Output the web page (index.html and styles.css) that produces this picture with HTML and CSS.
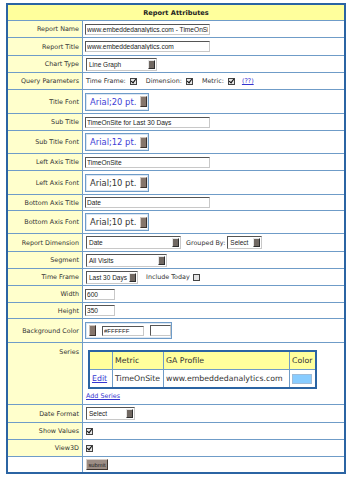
FILE: index.html
```html
<!DOCTYPE html>
<html>
<head>
<meta charset="utf-8">
<link rel="stylesheet" href="styles.css">
</head>
<body>
<div class="attrs">
  <div class="hd">Report Attributes</div>

  <div class="lbl">Report Name</div>
  <div class="val"><input class="txt wide" value="www.embeddedanalytics.com - TimeOnSite"></div>

  <div class="lbl">Report Title</div>
  <div class="val"><input class="txt wide" value="www.embeddedanalytics.com"></div>

  <div class="lbl">Chart Type</div>
  <div class="val"><span class="sel w-chart"><span class="sel-t">Line Graph</span><span class="arr"></span></span></div>

  <div class="lbl">Query Parameters</div>
  <div class="val"><span class="qp">Time Frame:</span><span class="cb on"></span><span class="qp">Dimension:</span><span class="cb on"></span><span class="qp">Metric:</span><span class="cb on"></span><a class="lnk qq" href="#">(??)</a></div>

  <div class="lbl">Title Font</div>
  <div class="val"><span class="fp blue"><span class="fp-t">Arial;20 pt.</span><span class="btn-b"></span></span></div>

  <div class="lbl">Sub Title</div>
  <div class="val"><input class="txt wide" value="TimeOnSite for Last 30 Days"></div>

  <div class="lbl">Sub Title Font</div>
  <div class="val"><span class="fp blue"><span class="fp-t">Arial;12 pt.</span><span class="btn-b"></span></span></div>

  <div class="lbl">Left Axis Title</div>
  <div class="val"><input class="txt wide" value="TimeOnSite"></div>

  <div class="lbl">Left Axis Font</div>
  <div class="val"><span class="fp"><span class="fp-t">Arial;10 pt.</span><span class="btn-b"></span></span></div>

  <div class="lbl">Bottom Axis Title</div>
  <div class="val"><input class="txt wide" value="Date"></div>

  <div class="lbl">Bottom Axis Font</div>
  <div class="val"><span class="fp"><span class="fp-t">Arial;10 pt.</span><span class="btn-b"></span></span></div>

  <div class="lbl">Report Dimension</div>
  <div class="val"><span class="sel w-dim"><span class="sel-t">Date</span><span class="arr"></span></span><span class="grp">Grouped By:</span><span class="sel w-grp"><span class="sel-t">Select</span><span class="arr"></span></span></div>

  <div class="lbl">Segment</div>
  <div class="val"><span class="sel w-seg"><span class="sel-t">All Visits</span><span class="arr"></span></span></div>

  <div class="lbl">Time Frame</div>
  <div class="val"><span class="sel w-tf"><span class="sel-t">Last 30 Days</span><span class="arr"></span></span><span class="inc">Include Today</span><span class="cb"></span></div>

  <div class="lbl">Width</div>
  <div class="val"><input class="txt num" value="600"></div>

  <div class="lbl">Height</div>
  <div class="val"><input class="txt num" value="350"></div>

  <div class="lbl">Background Color</div>
  <div class="val"><span class="bgc"><span class="btn-b"></span><input class="txt hex" value="#FFFFFF"><span class="swbox"></span></span></div>

  <div class="lbl top">Series</div>
  <div class="val top">
    <div class="ser">
      <div class="sh"></div><div class="sh">Metric</div><div class="sh">GA Profile</div><div class="sh">Color</div>
      <div class="sd"><a class="lnk" href="#">Edit</a></div><div class="sd">TimeOnSite</div><div class="sd">www.embeddedanalytics.com</div><div class="sd"><span class="swatch"></span></div>
    </div>
    <a class="lnk add" href="#">Add Series</a>
  </div>

  <div class="lbl">Date Format</div>
  <div class="val"><span class="sel w-df"><span class="sel-t">Select</span><span class="arr"></span></span></div>

  <div class="lbl">Show Values</div>
  <div class="val"><span class="cb on"></span></div>

  <div class="lbl">View3D</div>
  <div class="val"><span class="cb on"></span></div>

  <div class="lbl blank"></div>
  <div class="val"><button class="sub">submit</button></div>
</div>
</body>
</html>
```

FILE: styles.css
```css
html, body { margin: 0; padding: 0; background: #fff; }
body { padding: 3px 0 0 6px; font-family: "DejaVu Sans", Verdana, sans-serif; font-size: 6.4px; color: #333; }

.attrs {
  display: grid;
  width: 340px;
  box-sizing: border-box;
  border: 2px solid #2b64a3;
  background: #6f9cc8;
  gap: 1px;
  grid-template-columns: 74px 1fr;
  grid-template-rows: 15px 16px 17px 16px 16px 23px 16px 22px 16px 23px 15px 22px 17px 16px 16px 16px 15px 23px 61px 17px 16px 16px 15px;
}
.hd { grid-column: 1 / -1; background: #ffff9c; font-weight: bold; color: #222; font-size: 6.6px; display: flex; align-items: center; justify-content: center; }
.lbl { background: #ffffcc; display: flex; align-items: center; justify-content: flex-end; padding-right: 3px; white-space: nowrap; }
.lbl.blank { background: #fff; }
.val { background: #fff; display: flex; align-items: center; padding-left: 2px; white-space: nowrap; }
.lbl.top { align-items: flex-start; padding-top: 5px; }
.val.top { flex-direction: column; align-items: flex-start; padding-left: 3px; }

.txt { font-family: "Liberation Sans", Arial, sans-serif; font-size: 6.6px; color: #222; height: 11px; box-sizing: border-box; padding: 0 1px; margin: 0; border: 1px solid; border-color: #555 #c8c8c8 #c8c8c8 #555; background: #fff; outline: none; }
.wide { width: 125px; }
.num { width: 30px; }
.hex { width: 42px; height: 10px; font-size: 6px; }

.sel { display: flex; align-items: stretch; height: 13px; box-sizing: border-box; border: 1px solid; border-color: #555 #c8c8c8 #c8c8c8 #555; background: #fff; font-family: "Liberation Sans", Arial, sans-serif; font-size: 6.5px; color: #222; margin-left: 1px; }
.sel-t { flex: 1; display: flex; align-items: center; padding-left: 2px; }
.arr { width: 5px; margin: 1px; background: #706862; border: 1px solid; border-color: #e6e6e6 #2e2e2e #2e2e2e #e6e6e6; }
.w-chart { width: 71px; }
.w-dim { width: 95px; }
.w-grp { width: 35px; }
.w-seg { width: 81px; }
.w-tf { width: 52px; }
.w-df { width: 49px; }
.grp { margin: 0 1px 0 5px; }
.inc { margin: 0 2px 0 8px; }

.qp { margin: 0 3px 0 0; }
.cb + .qp { margin-left: 9px; }
.qp:first-child { margin-left: 1px; }
.qq { margin-left: 7px; }
.cb { display: inline-block; flex: none; width: 5px; height: 5px; border: 1px solid #444; background: #e4e4e4; position: relative; margin-left: 1px; }
.cb.on::after { content: ""; position: absolute; left: 1px; top: -1px; width: 2px; height: 4px; border: solid #111; border-width: 0 1px 1px 0; transform: rotate(38deg); }

.lnk { color: #3434d0; text-decoration: underline; }

.fp { display: flex; align-items: center; justify-content: space-between; width: 64px; height: 18px; box-sizing: border-box; border: 1px solid #6f9cc8; box-shadow: inset 0 0 0 1px #dce7f3; font-size: 8.4px; color: #333; padding: 0 1px 0 4px; }
.fp.blue { color: #3d3dd6; }
.btn-b { display: inline-block; flex: none; width: 5px; height: 9px; background: #85756b; border: 1px solid; border-color: #cfc5be #3d332d #3d332d #cfc5be; }

.bgc { display: flex; align-items: center; width: 87px; height: 17px; box-sizing: border-box; border: 1px solid #6f9cc8; box-shadow: inset 0 0 0 1px #dce7f3; padding-left: 3px; }
.bgc .hex { margin-left: 6px; }
.swbox { display: inline-block; width: 20px; height: 9px; border: 1px solid; border-color: #555 #c8c8c8 #c8c8c8 #555; margin-left: 6px; }

.ser { display: grid; grid-template-columns: 22px 50px 125px 25px; grid-template-rows: 17px 17px; gap: 1px; background: #6f9cc8; border: 2px solid #2b64a3; margin: 7px 0 0 2px; font-size: 7.8px; color: #333; }
.sh, .sd { display: flex; align-items: center; padding-left: 2px; white-space: nowrap; }
.sh { background: #ffff9c; }
.sd { background: #fff; }
.swatch { display: inline-block; width: 18px; height: 8px; background: #88ccff; border: 1px solid #9fbcd8; }
.add { margin: 3px 0 0 0; font-size: 6.4px; }

.sub { font-family: "Liberation Sans", Arial, sans-serif; font-size: 5.8px; color: #222; background: #9c8d84; border: 1px solid; border-color: #d8cfc9 #3d332d #3d332d #d8cfc9; padding: 0 1px; height: 11px; width: 22px; margin: 0 0 0 1px; }
```
